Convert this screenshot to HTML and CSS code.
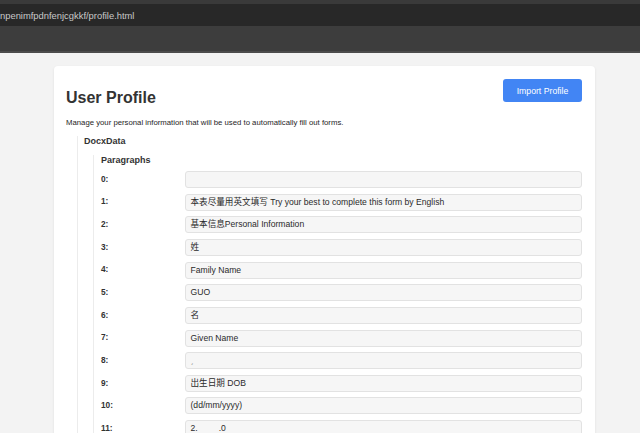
FILE: index.html
```html
<!DOCTYPE html>
<html>
<head>
<meta charset="utf-8">
<link rel="stylesheet" href="styles.css">
</head>
<body>
<div class="chrome">
  <div class="tabstrip"></div>
  <div class="urlbar"><span class="url">npenimfpdnfenjcgkkf/profile.html</span></div>
  <div class="toolbar"></div>
  <div class="sep"></div>
</div>
<main class="page">
  <section class="card">
    <header class="head">
      <h1 class="title">User Profile</h1>
      <button class="btn">Import Profile</button>
    </header>
    <p class="desc">Manage your personal information that will be used to automatically fill out forms.</p>
    <div class="group">
      <div class="group-title">DocxData</div>
      <div class="sub">
        <div class="sub-title">Paragraphs</div>
        <div class="rows">
          <div class="row"><span class="lbl">0:</span><div class="field"></div></div>
          <div class="row"><span class="lbl">1:</span><div class="field">本表尽量用英文填写 Try your best to complete this form by English</div></div>
          <div class="row"><span class="lbl">2:</span><div class="field">基本信息Personal Information</div></div>
          <div class="row"><span class="lbl">3:</span><div class="field">姓</div></div>
          <div class="row"><span class="lbl">4:</span><div class="field">Family Name</div></div>
          <div class="row"><span class="lbl">5:</span><div class="field">GUO</div></div>
          <div class="row"><span class="lbl">6:</span><div class="field">名</div></div>
          <div class="row"><span class="lbl">7:</span><div class="field">Given Name</div></div>
          <div class="row"><span class="lbl">8:</span><div class="field"><span class="tick">ˏ</span></div></div>
          <div class="row"><span class="lbl">9:</span><div class="field">出生日期 DOB</div></div>
          <div class="row"><span class="lbl">10:</span><div class="field">(dd/mm/yyyy)</div></div>
          <div class="row"><span class="lbl">11:</span><div class="field">2.<span class="gap"></span>.0</div></div>
        </div>
      </div>
    </div>
  </section>
</main>
</body>
</html>
```
FILE: styles.css
```css
html, body {
  margin: 0;
  padding: 0;
  overflow: hidden;
  height: 433px;
}
body {
  background: #f3f3f3;
  font-family: "Liberation Sans", Arial, "Noto Sans CJK SC", sans-serif;
  color: #333;
}
.chrome {
  display: flex;
  flex-direction: column;
}
.tabstrip {
  height: 4px;
  background: #3a3a3a;
}
.urlbar {
  height: 22px;
  background: #282828;
  display: flex;
  align-items: center;
}
.url {
  font-size: 9.4px;
  color: #c9c9c9;
  line-height: 1;
  padding-top: 1px;
}
.toolbar {
  height: 25px;
  background: #3d3d3d;
}
.sep {
  height: 2px;
  background: #4c4c4c;
}
.page {
  padding: 13px 0 0 54px;
}
.card {
  width: 541px;
  box-sizing: border-box;
  background: #fff;
  border-radius: 4px;
  box-shadow: 0 1px 3px rgba(0, 0, 0, 0.08);
  padding: 13px 13px 20px 12px;
}
.head {
  display: flex;
  justify-content: space-between;
  align-items: flex-start;
}
.title {
  margin: 9.5px 0 0 0;
  font-size: 16px;
  line-height: 18.4px;
  font-weight: bold;
  color: #333;
}
.btn {
  width: 79px;
  height: 23px;
  border: none;
  border-radius: 3px;
  background: #4285f4;
  color: #fff;
  font-family: "Liberation Sans", Arial, sans-serif;
  font-size: 8.7px;
  padding: 0;
}
.desc {
  margin: 10px 0 0 0;
  font-size: 7.75px;
  line-height: 11px;
  color: #1e1e1e;
}
.group {
  margin: 8px 0 0 11px;
  border-left: 1px solid #ececec;
  padding-left: 6px;
}
.group-title {
  font-size: 9px;
  font-weight: bold;
  line-height: 11px;
  color: #333;
}
.sub {
  margin: 8px 0 0 9px;
  border-left: 1px solid #ececec;
  padding-left: 7px;
}
.sub-title {
  font-size: 9px;
  font-weight: bold;
  line-height: 11px;
  color: #333;
}
.rows {
  margin-top: 5px;
  display: flex;
  flex-direction: column;
  gap: 5.67px;
}
.row {
  display: flex;
  align-items: flex-start;
}
.lbl {
  width: 84.3px;
  flex: none;
  font-size: 8.3px;
  font-weight: bold;
  line-height: 10px;
  padding-top: 2.7px;
  color: #333;
}
.field {
  flex: 1;
  height: 17px;
  box-sizing: border-box;
  background: #f6f6f6;
  border: 1px solid #e2e2e2;
  border-radius: 3px;
  padding: 0 4.2px;
  font-size: 8.6px;
  line-height: 15.5px;
  color: #2a2a2a;
  white-space: nowrap;
  overflow: hidden;
}
.tick {
  color: #888;
}
.gap {
  display: inline-block;
  width: 21px;
}
```
